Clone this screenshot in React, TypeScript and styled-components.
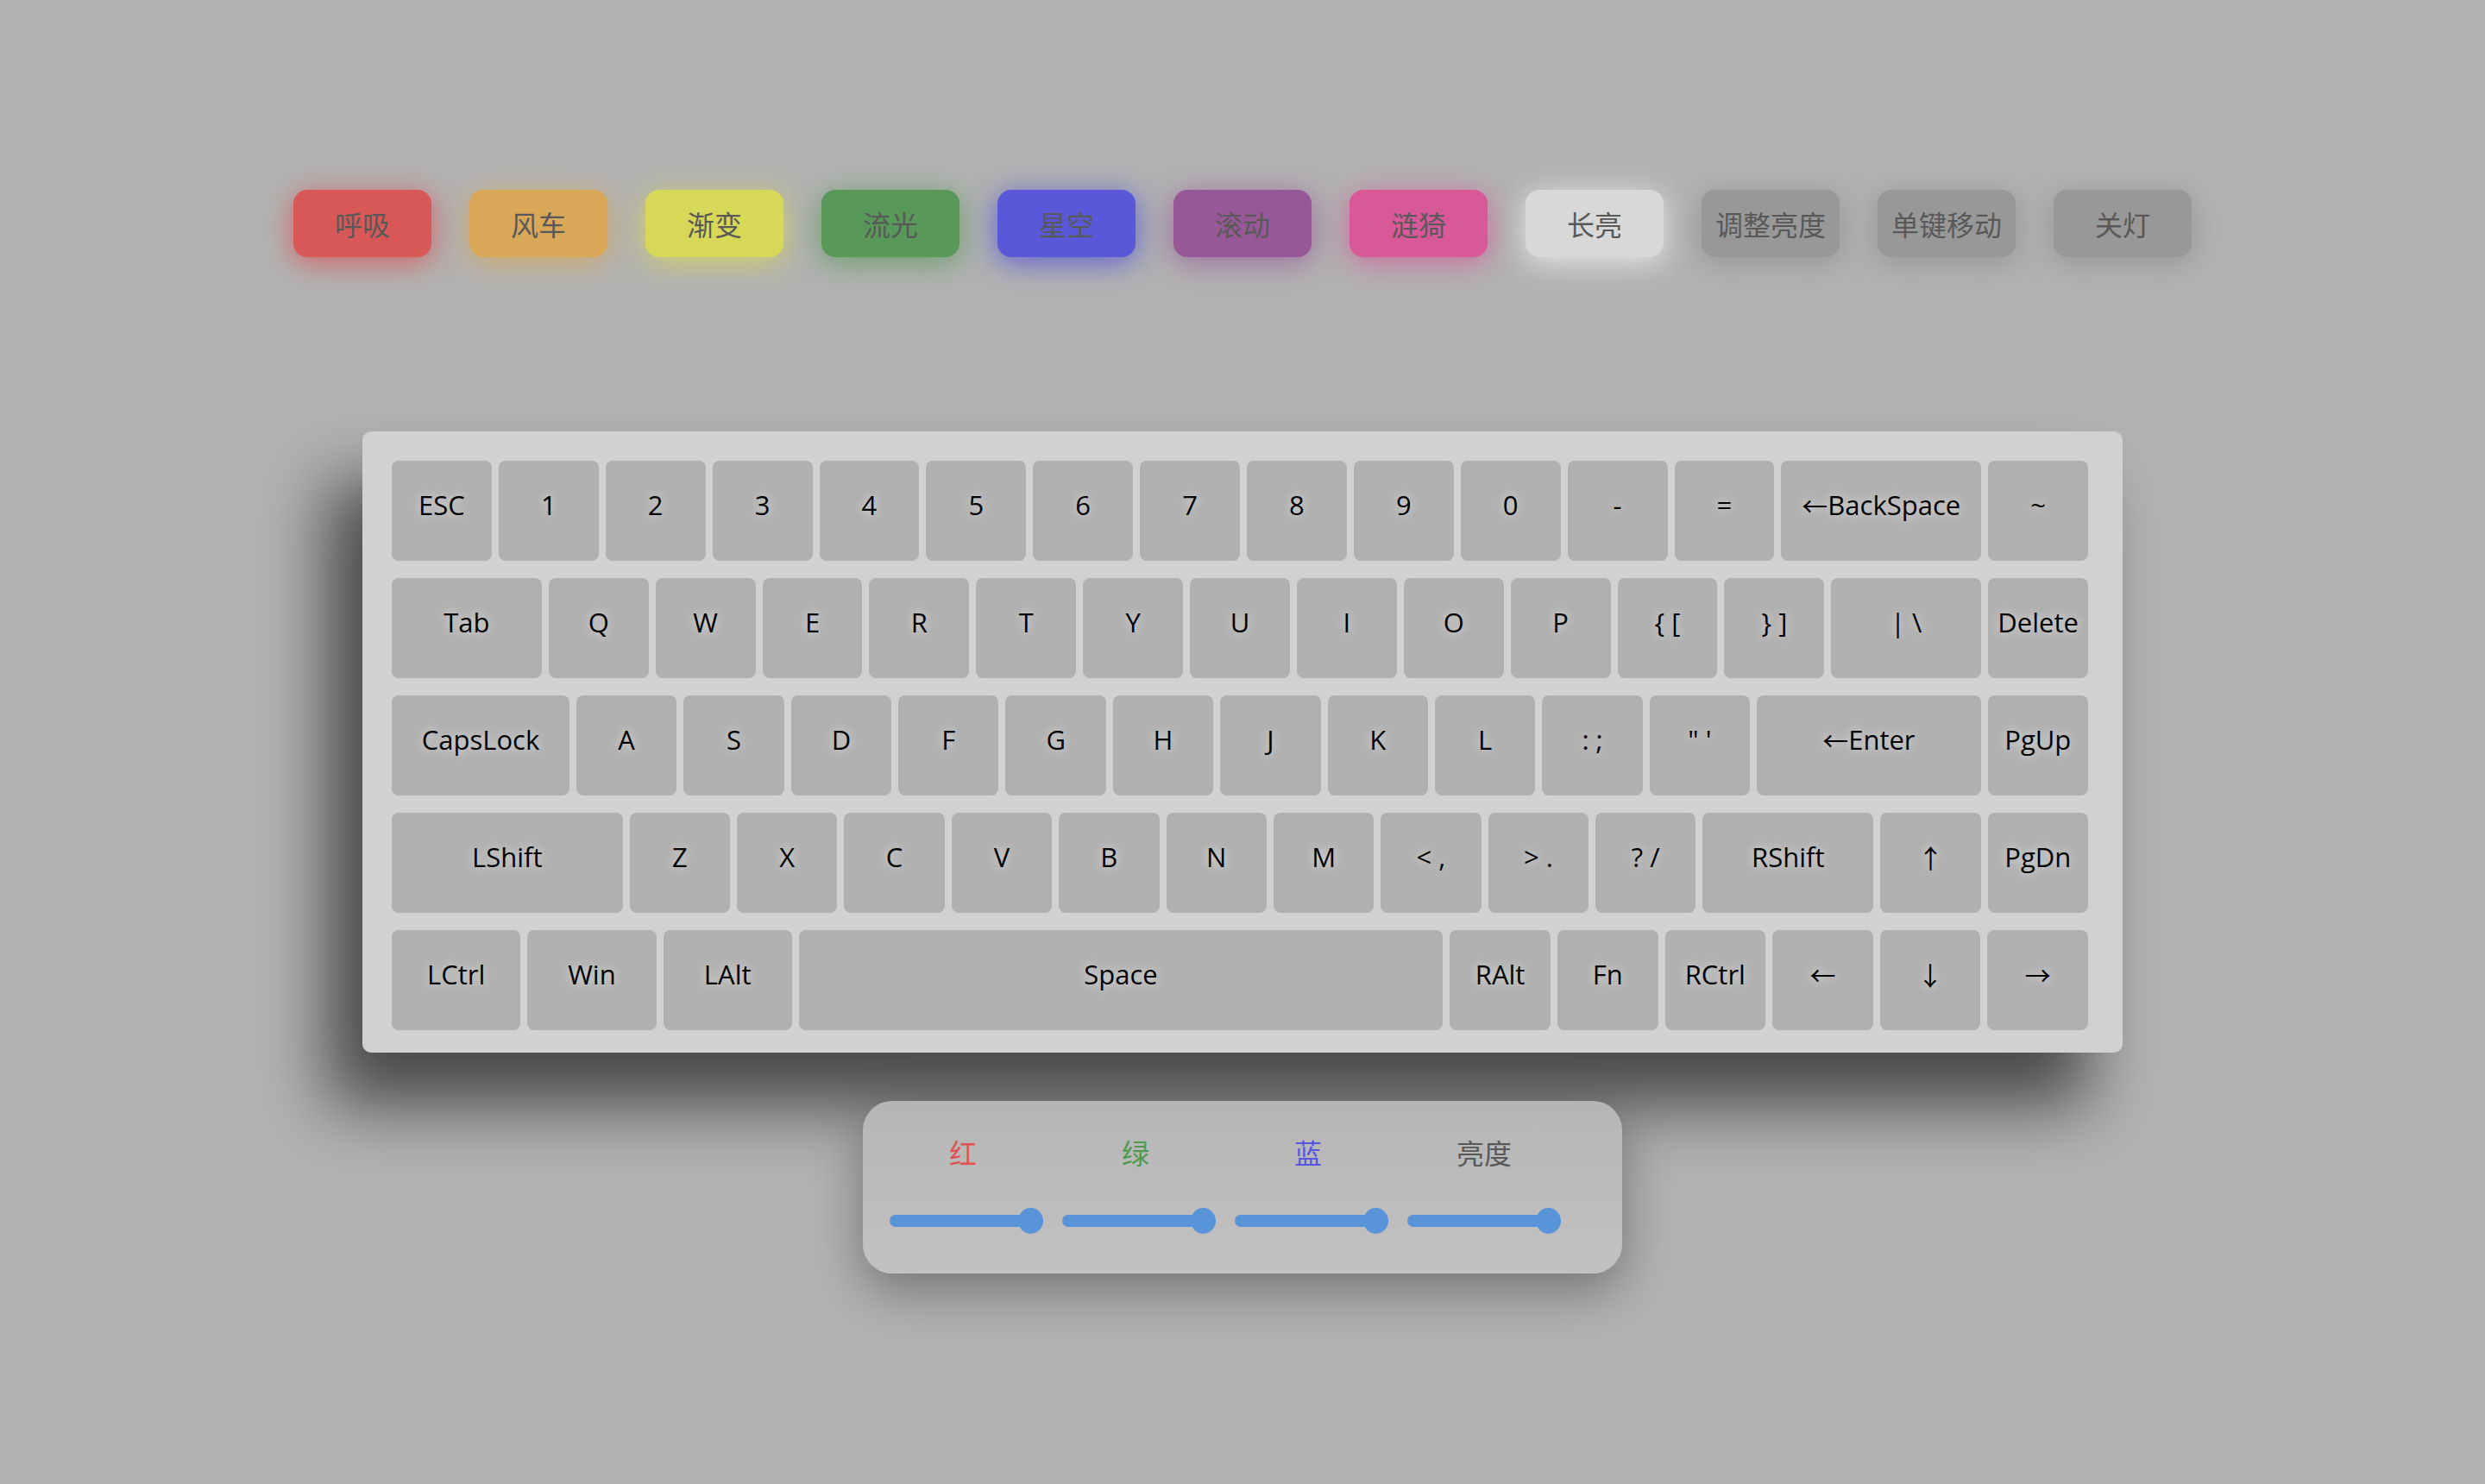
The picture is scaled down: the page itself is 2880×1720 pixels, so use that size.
import React from "react";
import styled, { createGlobalStyle } from "styled-components";

const GlobalStyle = createGlobalStyle`
  html, body {
    margin: 0;
    padding: 0;
    background: #b2b2b2;
  }
  body {
    font-family: "Open Sans", "Liberation Sans", "Noto Sans CJK SC", sans-serif;
  }
`;

const Page = styled.div`
  min-height: 1720px;
  box-sizing: border-box;
  padding-top: 220px;
  display: flex;
  flex-direction: column;
  align-items: center;
`;

const ModeBar = styled.div`
  display: flex;
  gap: 44px;
`;

const ModeButton = styled.button<{ $color: string; $glow: string }>`
  width: 160px;
  height: 78px;
  padding: 0;
  border: none;
  border-radius: 16px;
  background: ${(p) => p.$color};
  box-shadow: 0 6px 34px ${(p) => p.$glow};
  color: #585858;
  font-family: "Noto Sans CJK SC", sans-serif;
  font-size: 32px;
  display: flex;
  align-items: center;
  justify-content: center;
`;

const Keyboard = styled.div`
  margin-top: 202px;
  width: 2040px;
  box-sizing: border-box;
  padding: 34px 40px 26px 34px;
  background: #d1d1d1;
  border-radius: 10px;
  box-shadow: -40px 60px 80px rgba(0, 0, 0, 0.6);
  display: flex;
  flex-direction: column;
  gap: 20px;
`;

const KeyRow = styled.div`
  display: flex;
  gap: 8px;
`;

const Key = styled.div<{ $u: number }>`
  flex: ${(p) => p.$u} 1 0;
  min-width: 0;
  height: 116px;
  box-sizing: border-box;
  padding-bottom: 14px;
  background: #b0b0b0;
  border-radius: 8px;
  display: flex;
  align-items: center;
  justify-content: center;
  font-size: 31px;
  color: #000;
  text-shadow: 0 0 12px rgba(255, 255, 255, 0.75);
  white-space: pre;
`;

const Arrow = styled.span`
  font-family: "Noto Sans CJK SC", "DejaVu Sans", sans-serif;
  font-size: 30px;
  line-height: 1;
`;

const ColorPanel = styled.div`
  margin-top: 56px;
  width: 880px;
  height: 200px;
  box-sizing: border-box;
  padding: 37px 60px 0 20px;
  border-radius: 34px;
  background: linear-gradient(#b5b5b5, #c2c2c2);
  box-shadow: 0 20px 60px rgba(0, 0, 0, 0.35);
  display: grid;
  grid-template-columns: repeat(4, 200px);
  align-content: start;
`;

const Channel = styled.div`
  display: flex;
  flex-direction: column;
  align-items: center;
`;

const ChannelLabel = styled.span<{ $color: string; $shift: number }>`
  font-family: "Noto Sans CJK SC", sans-serif;
  font-size: 32px;
  line-height: 44px;
  margin-right: ${(p) => p.$shift}px;
  color: ${(p) => p.$color};
`;

const SliderTrack = styled.div`
  margin-top: 51px;
  width: 178px;
  height: 14px;
  border-radius: 7px;
  background: #5a94d8;
  display: flex;
  align-items: center;
  justify-content: flex-end;
`;

const SliderThumb = styled.div`
  flex-shrink: 0;
  width: 29px;
  height: 30px;
  border-radius: 50%;
  background: #5a94d8;
`;

const modes: { label: string; color: string; glow: string }[] = [
  { label: "呼吸", color: "#d85858", glow: "rgba(216,88,88,0.9)" },
  { label: "风车", color: "#d8a858", glow: "rgba(216,168,88,0.8)" },
  { label: "渐变", color: "#d8d858", glow: "rgba(216,216,88,0.8)" },
  { label: "流光", color: "#589858", glow: "rgba(88,152,88,0.8)" },
  { label: "星空", color: "#5858d8", glow: "rgba(88,88,216,0.9)" },
  { label: "滚动", color: "#985898", glow: "rgba(152,88,152,0.8)" },
  { label: "涟猗", color: "#d85898", glow: "rgba(216,88,152,0.8)" },
  { label: "长亮", color: "#d8d8d8", glow: "rgba(236,236,236,0.9)" },
  { label: "调整亮度", color: "#989898", glow: "rgba(140,140,140,0.8)" },
  { label: "单键移动", color: "#989898", glow: "rgba(140,140,140,0.8)" },
  { label: "关灯", color: "#989898", glow: "rgba(140,140,140,0.8)" },
];

type K = [string, number];
const k = (label: string, u = 1): K => [label, u];

const rows: K[][] = [
  [
    k("ESC"), k("1"), k("2"), k("3"), k("4"), k("5"), k("6"), k("7"), k("8"),
    k("9"), k("0"), k("-"), k("="), k("←BackSpace", 2), k("~"),
  ],
  [
    k("Tab", 1.5), k("Q"), k("W"), k("E"), k("R"), k("T"), k("Y"), k("U"),
    k("I"), k("O"), k("P"), k("{ ["), k("} ]"), k("| \\", 1.5), k("Delete"),
  ],
  [
    k("CapsLock", 1.77), k("A"), k("S"), k("D"), k("F"), k("G"), k("H"),
    k("J"), k("K"), k("L"), k(": ;"), k("\" '"), k("←Enter", 2.23), k("PgUp"),
  ],
  [
    k("LShift", 2.3), k("Z"), k("X"), k("C"), k("V"), k("B"), k("N"), k("M"),
    k("< ,"), k("> ."), k("? /"), k("RShift", 1.7), k("↑"), k("PgDn"),
  ],
  [
    k("LCtrl", 1.28), k("Win", 1.28), k("LAlt", 1.28), k("Space", 6.4),
    k("RAlt"), k("Fn"), k("RCtrl"), k("←"), k("↓"), k("→"),
  ],
];

const ARROWS = "←↑→↓";

function KeyLabel({ label }: { label: string }) {
  if (label.length > 0 && ARROWS.includes(label[0])) {
    return (
      <>
        <Arrow>{label[0]}</Arrow>
        {label.slice(1)}
      </>
    );
  }
  return <>{label}</>;
}

const channels = [
  { label: "红", color: "#e05353", shift: 8 },
  { label: "绿", color: "#4f9a4f", shift: 8 },
  { label: "蓝", color: "#5656e0", shift: 8 },
  { label: "亮度", color: "#585858", shift: 0 },
];

export default function App() {
  return (
    <>
      <GlobalStyle />
      <Page>
        <ModeBar>
          {modes.map((m) => (
            <ModeButton key={m.label} $color={m.color} $glow={m.glow}>
              {m.label}
            </ModeButton>
          ))}
        </ModeBar>
        <Keyboard>
          {rows.map((row, i) => (
            <KeyRow key={i}>
              {row.map(([label, u], j) => (
                <Key key={j} $u={u}>
                  <KeyLabel label={label} />
                </Key>
              ))}
            </KeyRow>
          ))}
        </Keyboard>
        <ColorPanel>
          {channels.map((c) => (
            <Channel key={c.label}>
              <ChannelLabel $color={c.color} $shift={c.shift}>
                {c.label}
              </ChannelLabel>
              <SliderTrack>
                <SliderThumb />
              </SliderTrack>
            </Channel>
          ))}
        </ColorPanel>
      </Page>
    </>
  );
}
